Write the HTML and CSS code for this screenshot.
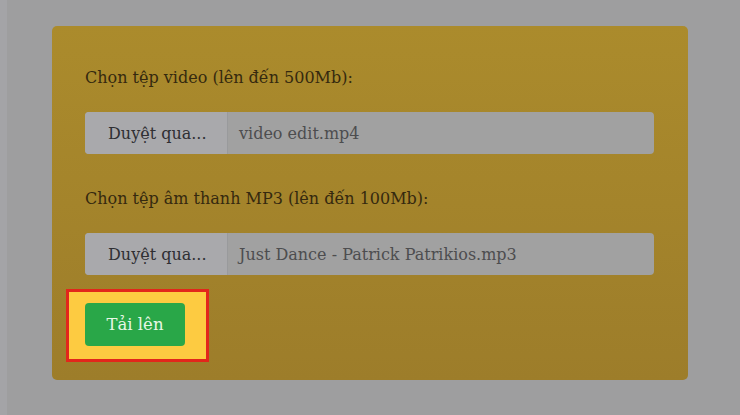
FILE: index.html
```html
<!DOCTYPE html>
<html lang="vi">
<head>
  <meta charset="UTF-8">
  <title>Tải lên</title>
  <link rel="stylesheet" href="styles.css">
</head>
<body>
  <div class="page">
    <form class="card">
      <label class="label">Chọn tệp video (lên đến 500Mb):</label>
      <div class="file-group">
        <span class="browse">Duyệt qua...</span>
        <span class="file-name">video edit.mp4</span>
      </div>
      <label class="label label-second">Chọn tệp âm thanh MP3 (lên đến 100Mb):</label>
      <div class="file-group">
        <span class="browse">Duyệt qua...</span>
        <span class="file-name">Just Dance - Patrick Patrikios.mp3</span>
      </div>
      <div class="mark">
        <button type="button" class="upload">Tải lên</button>
      </div>
    </form>
  </div>
</body>
</html>
```

FILE: styles.css
```css
* {
  box-sizing: border-box;
  margin: 0;
  padding: 0;
}
body {
  background: #9e9e9f;
  font-family: "DejaVu Serif", "Liberation Serif", serif;
  font-size: 16px;
  width: 740px;
  height: 415px;
  overflow: hidden;
}
.page {
  height: 100%;
  padding: 26px 52px 0 45px;
  border-left: 7px solid #a4a4a7;
}
.card {
  display: flex;
  flex-direction: column;
  align-items: flex-start;
  width: 636px;
  height: 354px;
  padding: 39px 34px 0 33px;
  border-radius: 5px;
  background: linear-gradient(#ab8b2c, #9d7d2a);
}
.label {
  line-height: 25px;
  color: #35290f;
}
.label-second {
  margin-top: 32px;
}
.file-group {
  display: flex;
  width: 100%;
  height: 42px;
  margin-top: 22px;
  border-radius: 4px;
  background: #a1a1a1;
  overflow: hidden;
}
.browse {
  display: flex;
  align-items: center;
  width: 143px;
  padding-left: 23px;
  background: #a9a9ac;
  border-right: 1px solid #999a9c;
  color: #2f2f33;
}
.file-name {
  display: flex;
  align-items: center;
  padding-left: 11px;
  color: #4d4d4f;
}
.mark {
  margin: 14px 0 0 -19px;
  padding: 11px 21px 13px 16px;
  border: 3px solid #e2261b;
  background: #fdcb41;
}
.upload {
  width: 100px;
  height: 43px;
  border: none;
  border-radius: 4px;
  background: #29a748;
  color: #e8f7e6;
  font-family: inherit;
  font-size: 16.5px;
}
```
